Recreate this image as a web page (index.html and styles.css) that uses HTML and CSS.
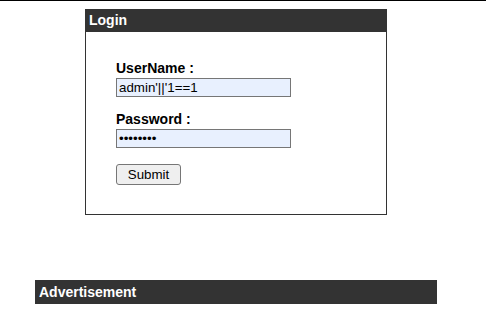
FILE: index.html
```html
<!DOCTYPE html>
<html lang="en">
<head>
    <meta charset="UTF-8">
    <meta name="viewport" content="width=device-width, initial-scale=1.0">
    <title>Login</title>
    <link rel="stylesheet" href="styles.css">
</head>
<body>
    <div class="topline"></div>

    <div class="login-box">
        <div class="box-head">Login</div>
        <div class="box-body">
            <form>
                <label for="username">UserName :</label>
                <input type="text" id="username" value="admin'||'1==1">

                <label for="password" class="second">Password :</label>
                <input type="password" id="password" value="12345678">

                <button type="button">Submit</button>
            </form>
        </div>
    </div>

    <div class="advert">
        <div class="box-head">Advertisement</div>
    </div>
</body>
</html>
```

FILE: styles.css
```css
body {
    font-family: "Liberation Sans", Arial, sans-serif;
    margin: 0;
    padding: 0;
    background: #fff;
}

.topline {
    border-top: 1px solid #000;
}

.box-head {
    background-color: #333;
    color: white;
    font-weight: bold;
    font-size: 14px;
    line-height: 17px;
    padding: 3px 4px;
}

.login-box {
    width: 302px;
    margin: 8px 0 0 85px;
}

.box-body {
    border: 1px solid #333;
    border-top: none;
    height: 183px;
    box-sizing: border-box;
    padding: 28px 0 0 30px;
}

label {
    display: block;
    font-weight: bold;
    font-size: 14px;
    line-height: 16px;
    margin-bottom: 2px;
}

label.second {
    margin-top: 14px;
}

input {
    display: block;
    width: 175px;
    height: 19px;
    box-sizing: border-box;
    margin: 0;
    padding: 1px 2px;
    border: 1px solid #767676;
    background-color: #e8f0fe;
    font-family: "Liberation Sans", Arial, sans-serif;
    font-size: 13.33px;
    color: #000;
}

button {
    display: block;
    margin-top: 16px;
    width: 65px;
    height: 21px;
    padding: 0;
    background-color: #efefef;
    border: 1px solid #767676;
    border-radius: 3px;
    font-family: "Liberation Sans", Arial, sans-serif;
    font-size: 13.33px;
    color: #000;
}

.advert {
    width: 402px;
    margin: 65px 0 0 35px;
}

.advert .box-head {
    line-height: 18px;
}
```
